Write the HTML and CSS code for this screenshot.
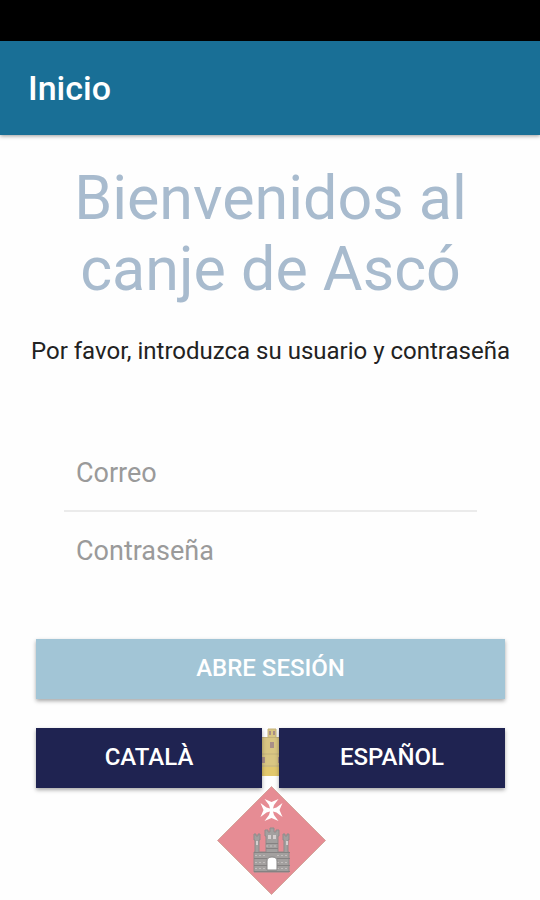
FILE: index.html
```
<!DOCTYPE html>
<html lang="es">
<head>
  <meta charset="UTF-8" />
  <meta name="viewport" content="width=device-width, initial-scale=1" />
  <title>Inicio</title>
  <link rel="stylesheet" href="styles.css">
</head>

<body>
  <div class="status-bar"></div>

  <!-- App bar -->
  <header class="app-bar">
    <h1>Inicio</h1>
  </header>

  <main class="content">
    <h2 class="welcome">Bienvenidos al canje de Ascó</h2>
    <p class="intro">Por favor, introduzca su usuario y contraseña</p>

    <!-- Login form -->
    <form id="login-form" class="login-form">
      <div class="fields">
        <input type="email" id="email" class="form-control" placeholder="Correo" aria-label="Correo">
        <input type="password" id="password" class="form-control" placeholder="Contraseña" aria-label="Contraseña">
      </div>
      <button type="submit" class="btn btn-login">ABRE SESIÓN</button>
    </form>

    <!-- Languages, with the town crest behind -->
    <div class="language-box">
      <svg class="crest" viewBox="-1 0 110 168" aria-hidden="true">
        <!-- crown -->
        <path fill="#d9c683" d="M38 48V20h3v-6h4V9h6V1h8v8h4v5h5v6h3v28z"/>
        <path fill="#e2c86d" d="M38 39h33v9H38z"/>
        <path fill="none" stroke="#c4b27c" stroke-width="1" d="M45 9.500h18M45 26h18M45 38h18M51 9V1h8v8"/>
        <path fill="#a98f88" d="M52 3h2v4h-2zM56 3h2v4h-2zM53 14h4v6h-4zM45 29h3v6h-3zM61 29h3v6h-3z"/>
        <!-- shield -->
        <path fill="#e68c94" stroke="#d3a69c" stroke-width="1" d="M54.500 58.500L108.500 112.500L54.500 166.500L0.500 112.500z"/>
        <!-- cross -->
        <path fill="#fff" transform="translate(54.500 82)" d="M-1.500 -1.500L-2.500 -5L-7 -11L0 -8L7 -11L2.500 -5L1.500 -1.500L5 -2.500L11 -7L8 0L11 7L5 2.500L1.500 1.500L2.500 5L7 11L0 8L-7 11L-2.500 5L-1.500 1.500L-5 2.500L-11 7L-8 0L-11 -7L-5 -2.500z"/>
        <!-- castle -->
        <path fill="#a3a09f" stroke="#8f8b8b" stroke-width="1" d="M37 144V124h1v-12h-1v-6h2v2h2v-2h2v6h-1v12h7v-16h-1v-6h3v2h2v-4h4v4h2v-2h3v6h-1v16h6v-12h-1v-6h2v2h2v-2h2v6h-1v12h1v20z"/>
        <path fill="none" stroke="#858282" stroke-width="1" d="M37 124.500h36M37 130.500h13M60 130.500h13M37 137.500h13M60 137.500h13M37 143.500h36M49 115.500h12M49 120.500h12"/>
        <path fill="none" stroke="#c2bebd" stroke-width="1" stroke-dasharray="2 2" d="M38 127.500h12M60 127.500h12M38 134.500h12M60 134.500h12M38 140.500h12M60 140.500h12M49 118h12"/>
        <path fill="#d5cfcf" d="M51 107h3v4h-3zM56 107h3v4h-3zM39 113h2v4h-2zM69 113h2v4h-2z"/>
        <path fill="#fff" stroke="#858383" stroke-width="1" d="M50 142v-9q0-4 5-4t5 4v9z"/>
      </svg>
      <div class="languages">
        <button type="button" class="btn btn-language">CATALÀ</button>
        <button type="button" class="btn btn-language">ESPAÑOL</button>
      </div>
    </div>
  </main>
</body>
</html>
```

FILE: styles.css
```
* {
  box-sizing: border-box;
}

body {
  margin: 0;
  min-height: 100vh;
  background: #fefefe;
  font-family: Roboto, sans-serif;
}

.status-bar {
  height: 41px;
  background: #000;
}

/* App bar */
.app-bar {
  display: flex;
  align-items: center;
  height: 94px;
  padding: 0 28px;
  background: #196f96;
  color: #fff;
  box-shadow: 0 1px 4px rgba(0, 0, 0, 0.4);
}

.app-bar h1 {
  margin: 0;
  font-size: 34px;
  font-weight: 500;
}

.content {
  padding: 28px 35px 4px 36px;
}

.welcome {
  margin: 0;
  color: #a8bbce;
  font-size: 61px;
  font-weight: 400;
  line-height: 71px;
  text-align: center;
}

.intro {
  margin: 32px -8px 0;
  color: #222;
  font-size: 24px;
  line-height: 28px;
  text-align: center;
}

/* Login form */
.login-form {
  margin-top: 70px;
}

.fields {
  padding: 0 28px;
}

.form-control {
  display: block;
  width: 100%;
  height: 77px;
  padding: 0 12px;
  border: none;
  background: transparent;
  color: #222;
  font-family: inherit;
  font-size: 27px;
  outline: none;
}

.form-control:first-child {
  border-bottom: 2px solid #ebebeb;
}

.form-control::placeholder {
  color: #9a9a9a;
  opacity: 1;
}

/* Buttons */
.btn {
  height: 60px;
  padding: 0 0 2px;
  border: none;
  color: #fff;
  font-family: inherit;
  font-size: 24px;
  font-weight: 500;
  cursor: pointer;
  box-shadow: 0 2px 4px rgba(0, 0, 0, 0.35);
}

.btn-login {
  width: 100%;
  margin-top: 50px;
  background: #a2c5d6;
}

.btn-language {
  flex: 1;
  background: #1f2351;
}

/* Crest and language buttons share one grid cell */
.language-box {
  display: grid;
  margin-top: 29px;
}

.crest,
.languages {
  grid-area: 1 / 1;
}

.crest {
  width: 110px;
  justify-self: center;
}

.languages {
  display: flex;
  align-self: start;
  gap: 17px;
  z-index: 1;
}
```
